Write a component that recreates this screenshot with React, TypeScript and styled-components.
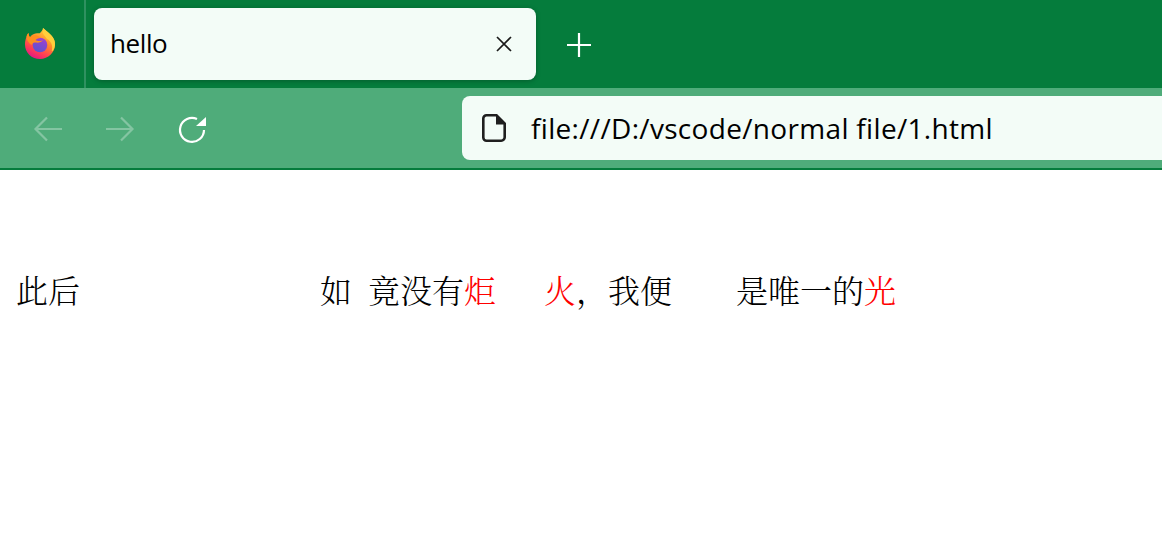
import styled, { createGlobalStyle } from 'styled-components';

const GlobalStyle = createGlobalStyle`
  html, body {
    margin: 0;
    padding: 0;
    background: #ffffff;
    overflow: hidden;
  }
`;

const Browser = styled.div`
  width: 1162px;
  height: 559px;
  display: flex;
  flex-direction: column;
  font-family: "Open Sans", "Liberation Sans", sans-serif;
`;

const TabBar = styled.div`
  height: 88px;
  background: #057c3c;
  display: flex;
  align-items: flex-start;
`;

const LogoCell = styled.div`
  width: 84px;
  height: 88px;
  border-right: 2px solid #2f9160;
  display: flex;
`;

const LogoMark = styled.svg`
  width: 31px;
  height: 32px;
  margin: 28px 0 0 25px;
`;

const Tab = styled.div`
  width: 442px;
  height: 72px;
  margin: 8px 0 0 8px;
  padding: 0 24px 0 16px;
  box-sizing: border-box;
  background: #f3fcf7;
  border-radius: 8px;
  box-shadow: 0 1px 5px rgba(0, 0, 0, 0.25);
  display: flex;
  align-items: center;
  justify-content: space-between;
`;

const TabTitle = styled.span`
  font-size: 26px;
  letter-spacing: -0.4px;
  line-height: 34px;
  margin-top: -2px;
  color: #000000;
`;

const NewTab = styled.svg`
  width: 24px;
  height: 24px;
  margin: 33px 0 0 31px;
`;

const ToolBar = styled.div`
  height: 80px;
  background: #4fac7a;
  border-bottom: 2px solid #057c3c;
  display: flex;
  align-items: center;
  padding-left: 32px;
`;

const NavIcon = styled.svg`
  width: 32px;
  height: 32px;
  margin: 2px 40px 0 0;
  flex: none;
`;

const UrlBar = styled.div`
  flex: 1;
  height: 64px;
  margin-left: 214px;
  background: #f3fcf7;
  border-radius: 8px 0 0 8px;
  display: flex;
  align-items: center;
  padding-left: 20px;
  gap: 25px;
`;

const UrlText = styled.span`
  font-size: 28px;
  letter-spacing: 0.32px;
  color: #000000;
  white-space: nowrap;
`;

const Page = styled.main`
  padding: 99px 16px 0;
  font-family: "Noto Serif CJK SC", "Noto Sans CJK SC", serif;
  font-size: 32px;
  font-weight: 300;
  line-height: 40px;
  color: #000000;
  white-space: nowrap;
`;

const Words = styled.span<{ $gap?: number; $red?: boolean }>`
  margin-left: ${(p) => p.$gap ?? 0}px;
  color: ${(p) => (p.$red ? '#ff0000' : 'inherit')};
`;

function FirefoxLogo() {
  return (
    <LogoMark viewBox="0 0 31 32">
      <defs>
        <linearGradient id="fxBody" x1="0.8" y1="0.05" x2="0.3" y2="1">
          <stop offset="0" stopColor="#ffd93b" />
          <stop offset="0.42" stopColor="#ff8a2a" />
          <stop offset="0.75" stopColor="#ff3d55" />
          <stop offset="1" stopColor="#e31587" />
        </linearGradient>
        <linearGradient id="fxCore" x1="0.7" y1="0" x2="0.3" y2="1">
          <stop offset="0" stopColor="#a03fd0" />
          <stop offset="1" stopColor="#5a55cc" />
        </linearGradient>
      </defs>
      <path
        d="M18 0c-.4 2.600-1.800 4-3.300 5.200C8.800 5 6 7 5 9.400 4.200 8.500 3.600 6.800 3.500 5 2.200 6 1.600 7.800 1.500 9.300.4 11.300 0 14 0 16.500 0 25 6.800 31 15 31s15-6.500 15-14.500C30 9.200 24 5.500 18 0z"
        fill="url(#fxBody)"
      />
      <path
        d="M18 0c5 4.500 10 7.500 11.500 12.500 1 3.500.5 7-1.500 10-1 1-1.500.5-1-1 1-4-1-8.500-5-10.500-2-3-4-5-4.500-6.500C18.500 3.500 18.300 2 18 0z"
        fill="#ffcf3c"
      />
      <circle cx="15" cy="17" r="7.300" fill="url(#fxCore)" />
      <path
        d="M3.500 5c.1 1.800.7 3.500 1.500 4.400C6.500 7.500 9 6.800 11 7.300c2 .5 3 1.500 4.500 2.700-2 .2-4 .8-5 2 1.500 1 4.500 1.300 7.500.6-1.500 1.600-4.500 2.400-7.500 1.900-2-.4-3.300.6-4 2.500C3.500 15 1.700 12 1.500 9.300 1.600 7.800 2.200 6 3.500 5z"
        fill="#ff8f1f"
      />
    </LogoMark>
  );
}

function App() {
  return (
    <Browser>
      <GlobalStyle />
      <TabBar>
        <LogoCell>
          <FirefoxLogo />
        </LogoCell>
        <Tab>
          <TabTitle>hello</TabTitle>
          <svg width="16" height="16" viewBox="0 0 16 16">
            <path d="M1 1l14 14M15 1L1 15" stroke="#1a1a1a" strokeWidth="1.700" fill="none" />
          </svg>
        </Tab>
        <NewTab viewBox="0 0 24 24">
          <path d="M12 0v24M0 12h24" stroke="#ffffff" strokeWidth="2.200" fill="none" />
        </NewTab>
      </TabBar>
      <ToolBar>
        <NavIcon viewBox="0 0 32 32">
          <path
            d="M30 16H3.500M15 4.500L3.500 16 15 27.500"
            stroke="#ffffff"
            strokeOpacity="0.3"
            strokeWidth="2.200"
            fill="none"
          />
        </NavIcon>
        <NavIcon viewBox="0 0 32 32">
          <path
            d="M2 16h26.500M17 4.500L28.500 16 17 27.500"
            stroke="#ffffff"
            strokeOpacity="0.3"
            strokeWidth="2.200"
            fill="none"
          />
        </NavIcon>
        <NavIcon viewBox="0 0 32 32">
          <path d="M21 6A12 12 0 1 0 28 17" stroke="#ffffff" strokeWidth="2.200" fill="none" />
          <path d="M30 4v9H20z" fill="#ffffff" />
        </NavIcon>
        <UrlBar>
          <svg width="24" height="28" viewBox="0 0 24 28">
            <path
              d="M4.500 1.300h10l8.200 8.200v13.700a3.500 3.500 0 0 1-3.500 3.500H4.500A3.200 3.200 0 0 1 1.300 23.500V4.500a3.200 3.200 0 0 1 3.200-3.200z"
              stroke="#1f1f1f"
              strokeWidth="2.600"
              fill="none"
            />
            <path d="M14 1.300h1l7.700 7.700v1.500H14z" fill="#1f1f1f" />
          </svg>
          <UrlText>file:///D:/vscode/normal file/1.html</UrlText>
        </UrlBar>
      </ToolBar>
      <Page>
        <Words>此后</Words>
        <Words $gap={240}>如</Words>
        <Words $gap={16}>竟没有</Words>
        <Words $red>炬</Words>
        <Words $gap={48} $red>火</Words>
        <Words>，我便</Words>
        <Words $gap={64}>是唯一的</Words>
        <Words $red>光</Words>
      </Page>
    </Browser>
  );
}

export default App;
